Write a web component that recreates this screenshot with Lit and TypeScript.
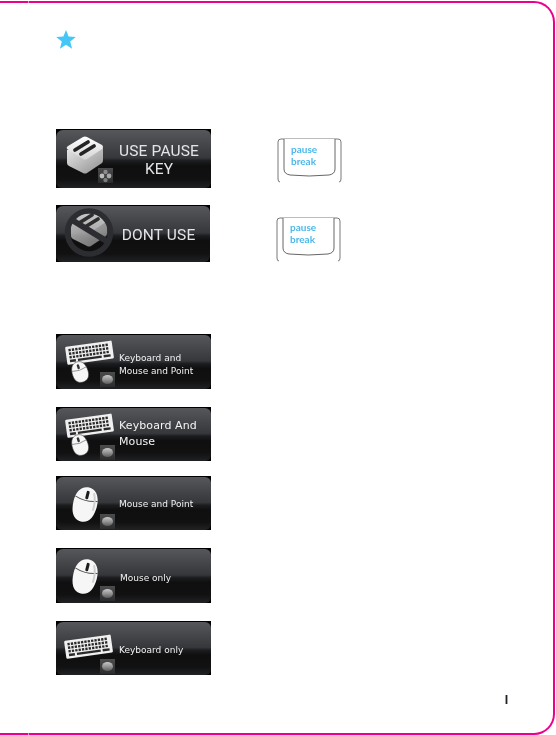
import { LitElement, html, css, svg } from "lit";
import { customElement } from "lit/decorators.js";

const defs = svg`<defs>
  <linearGradient id="cap" x1="0" y1="0" x2="0" y2="1"><stop offset="0" stop-color="#fff"/><stop offset="1" stop-color="#d4d4d4"/></linearGradient>
  <linearGradient id="side" x1="0" y1="0" x2="1" y2="1"><stop offset="0" stop-color="#e8e8e8"/><stop offset="1" stop-color="#8e8e8e"/></linearGradient>
  <linearGradient id="badge" x1="0" y1="0" x2="0" y2="1"><stop offset="0" stop-color="#4b4c4e"/><stop offset="1" stop-color="#2b2c2e"/></linearGradient>
  <linearGradient id="ball" x1="0" y1="0" x2="0" y2="1"><stop offset="0" stop-color="#c9c9c9"/><stop offset=".55" stop-color="#8f8f8f"/><stop offset="1" stop-color="#5a5a5a"/></linearGradient>
</defs>`;

const ballBadge = (x: number, y: number) => svg`
  <rect x=${x} y=${y} width="15" height="15" fill="url(#badge)"/>
  <ellipse cx=${x + 7.5} cy=${y + 7.5} rx="5.5" ry="4.5" fill="url(#ball)"/>`;

const dotsBadge = (x: number, y: number) => svg`
  <rect x=${x} y=${y} width="15" height="15" fill="url(#badge)"/>
  <circle cx=${x + 4} cy=${y + 8} r="2.4" fill="#bcbcbc"/>
  <circle cx=${x + 11} cy=${y + 8} r="2.4" fill="#a8a8a8"/>
  <circle cx=${x + 7.5} cy=${y + 4} r="2.2" fill="#8c8c8c"/>
  <circle cx=${x + 7.5} cy=${y + 12} r="2.2" fill="#7c7c7c"/>`;

const keyCap = () => svg`
  <path d="M11 21 L11 34 Q11 36 13 37 L27 44 Q29 45 31 44 L46 34 Q47 33 47 31 L47 19 Z" fill="url(#side)"/>
  <path d="M11 20 Q10 18 12 17 L27 8 Q29 7 31 8 L46 16 Q48 18 46 20 L31 30 Q29 31.5 27 30 Z" fill="url(#cap)"/>
  <path d="M19 21 L32 13" stroke="#242424" stroke-width="3.8" stroke-linecap="round"/>
  <path d="M25 25 L38 17" stroke="#242424" stroke-width="3.8" stroke-linecap="round"/>`;

const keyboard = () => {
  const keys = [];
  for (let r = 0; r < 3; r++) {
    for (let c = 0; c < 12; c++) {
      keys.push(svg`<rect x=${3 + c * 3.4} y=${2.5 + r * 3.6} width="2.3" height="2.4" fill="#2a2a2a"/>`);
    }
  }
  return svg`<g transform="translate(9 13) rotate(-8)">
    <rect width="47" height="18" rx="1.2" fill="#f0f0f0"/>
    ${keys}
    <rect x="3" y="13.4" width="6" height="2.4" fill="#2a2a2a"/>
    <rect x="11" y="13.4" width="24" height="2.4" fill="#2a2a2a"/>
    <rect x="37" y="13.4" width="7" height="2.4" fill="#2a2a2a"/>
  </g>`;
};

const smallMouse = () => svg`
  <g transform="translate(24 38) rotate(-18)">
    <path d="M0 -10.5 C6 -10.5 8 -5 8 1 C8 7 5 10.5 0 10.5 C-5 10.5 -8 7 -8 1 C-8 -5 -6 -10.5 0 -10.5 Z" fill="#f6f6f6" stroke="#333" stroke-width=".5"/>
    <path d="M-7.5 -3 Q0 -.5 7.5 -3" stroke="#777" stroke-width=".7" fill="none"/>
    <rect x="-1.2" y="-8" width="2.4" height="5" rx="1.1" fill="#333"/>
  </g>`;

const bigMouse = () => svg`
  <g transform="translate(29 28.5) rotate(14)">
    <path d="M0 -17.5 C8 -17.5 12 -10 12 -1 C12 10 8 17.5 0 17.5 C-8 17.5 -12 10 -12 -1 C-12 -10 -8 -17.5 0 -17.5 Z" fill="#f6f6f6"/>
    <path d="M-11.5 -6 Q0 -2 11.5 -6" stroke="#555" stroke-width="1" fill="none"/>
    <rect x="-1.4" y="-14" width="3" height="8.5" rx="1.4" fill="#1c1c1c"/>
    <path d="M6 -13 Q10 -6 9 4" stroke="#cfcfcf" stroke-width="2" fill="none"/>
  </g>`;

const icon = (body: unknown) =>
  html`<svg class="icon" viewBox="0 0 62 56" width="62" height="56" aria-hidden="true">${defs}${body}</svg>`;

const capIcon = icon(svg`${keyCap()}${dotsBadge(42, 39)}`);
const banIcon = icon(svg`
  <g opacity=".72" transform="translate(4 -3)">${keyCap()}</g>
  <path d="M16 15 L52 37" stroke="#2c2d31" stroke-width="6"/>
  <circle cx="33" cy="27.5" r="21.5" fill="none" stroke="#2c2d31" stroke-width="5.5"/>`);
const kbMouseIcon = icon(svg`${keyboard()}${smallMouse()}${ballBadge(44, 38)}`);
const mouseIcon = icon(svg`${bigMouse()}${ballBadge(44, 38)}`);
const kbIcon = icon(svg`<g transform="translate(-1 7)">${keyboard()}</g>${ballBadge(44, 38)}`);

const keyArt = html`<svg class="key-art" viewBox="0 0 65 45" width="65" height="45" aria-hidden="true">
  <path d="M3 44 Q1 44 1 41 L1 4 Q1 1 4 1 L61 1 Q64 1 64 4 L64 41 Q64 44 62 44" fill="none" stroke="#555" stroke-width=".8"/>
  <rect x="8" y="42" width="50" height="4" fill="#fff"/>
  <path d="M7 1 L7 31 Q7 36 13 37 Q32 39 52 37 Q58 36 58 31 L58 1" fill="#fff" stroke="#555" stroke-width=".9"/>
</svg>`;

@customElement("app-root")
export class AppRoot extends LitElement {
  static styles = css`
    :host { display: block; width: 556px; height: 735px; background: #fff; overflow: hidden; }
    .frame {
      box-sizing: border-box; position: relative; width: 555px; height: 734px; margin-top: 1px;
      border: solid #ec008c; border-width: 2px 2px 2px 0; border-radius: 0 21px 21px 0;
      padding: 27px 0 0 56px; display: flex; flex-direction: column;
    }
    .tick { position: absolute; left: 28px; width: 1px; height: 2px; background: #f58ac6; }
    .tick.t { top: -2px; } .tick.b { bottom: -2px; }
    .star { display: block; width: 20px; height: 19px; margin-bottom: 80px; }
    .row { display: flex; align-items: flex-start; }
    .r1 { margin-bottom: 17px; } .r2 { margin-bottom: 72px; }
    .btn {
      box-sizing: border-box; width: 155px; background: #000; display: flex; align-items: stretch;
      filter: blur(.4px); flex: none; overflow: hidden;
    }
    .skin {
      flex: 1; min-width: 0; display: flex; align-items: center; margin: 1px 0 0 0; border-radius: 7px 6px 6px 6px;
      background: linear-gradient(#56575b 0%, #36373b 48%, #1c1d1f 53%, #0f0f10 62%, #111112 85%, #212224 100%);
    }
    .icon { flex: none; display: block; align-self: flex-start; margin: -1px 1px 0 0; }
    .label { flex: 1; color: #f2f2f2; text-align: center; font-family: "DejaVu Sans", sans-serif; white-space: nowrap; }
    .btn.big .label { font-family: Roboto, sans-serif; font-size: 15.5px; line-height: 18px; color: #e4e4e8; letter-spacing: .15px; padding: 2px 12px 0 0; }
    .h59 { height: 59px; } .h57 { height: 57px; width: 154px; }
    .h55 { height: 55px; } .h54 { height: 54px; }
    .label.small { font-size: 9px; line-height: 13px; text-align: left; }
    .label.two { padding-top: 6px; }
    .label.wide { font-size: 11px; line-height: 16px; letter-spacing: .1px; text-align: left; color: #f4f4f4; padding-bottom: 2px; }
    .label.t1 { padding-top: 2px; }
    .label.t2 { padding: 5px 0 0 1px; }
    .label.t3 { padding-top: 4px; }
    .stack { display: flex; flex-direction: column; }
    .gap1 { margin-bottom: 18px; } .gap2 { margin-bottom: 15px; } .gap3 { margin-bottom: 18px; } .gap4 { margin-bottom: 18px; }
    .key {
      position: relative; box-sizing: border-box; width: 65px; height: 45px; margin: 9px 0 0 66px; flex: none;
      padding: 5px 0 0 14px; color: #4cb8ea; font: 700 10px/12px Lato, sans-serif; filter: blur(.25px);
    }
    .r2 .key { margin-top: 12px; padding-top: 4px; }
    .key-art { position: absolute; inset: 0; }
    .key span { position: relative; display: block; }
    .footer { margin-top: 19px; padding-right: 45px; align-self: flex-end; color: #231f20; font: 700 12px/12px "Liberation Sans", sans-serif; }
  `;

  private button(cls: string, ic: unknown, lines: string[], labelCls = "") {
    return html`<div class="btn ${cls}"><div class="skin">${ic}<div class="label ${labelCls}">${lines.map(
      (l, i) => html`${i ? html`<br />` : ""}${l}`
    )}</div></div></div>`;
  }

  render() {
    return html`<div class="frame">
      <i class="tick t"></i><i class="tick b"></i>
      <svg class="star" viewBox="0 0 20 19" aria-hidden="true"><path d="M10 0 L12.6 6.6 L19.8 7 L14.2 11.6 L16.1 18.8 L10 14.8 L3.9 18.8 L5.8 11.6 L.2 7 L7.4 6.6 Z" fill="#45c6f6"/></svg>
      <div class="row r1">
        ${this.button("big h59", capIcon, ["USE PAUSE", "KEY"])}
        <div class="key">${keyArt}<span>pause</span><span>break</span></div>
      </div>
      <div class="row r2">
        ${this.button("big h57", banIcon, ["DONT USE"])}
        <div class="key">${keyArt}<span>pause</span><span>break</span></div>
      </div>
      <div class="stack">
        ${this.button("h55 gap1", kbMouseIcon, ["Keyboard and", "Mouse and Point"], "small two")}
        ${this.button("h54 gap2", kbMouseIcon, ["Keyboard And", "Mouse"], "wide")}
        ${this.button("h54 gap3", mouseIcon, ["Mouse and Point"], "small t1")}
        ${this.button("h55 gap4", mouseIcon, ["Mouse only"], "small t2")}
        ${this.button("h54", kbIcon, ["Keyboard only"], "small t3")}
      </div>
      <div class="footer">I</div>
    </div>`;
  }
}
